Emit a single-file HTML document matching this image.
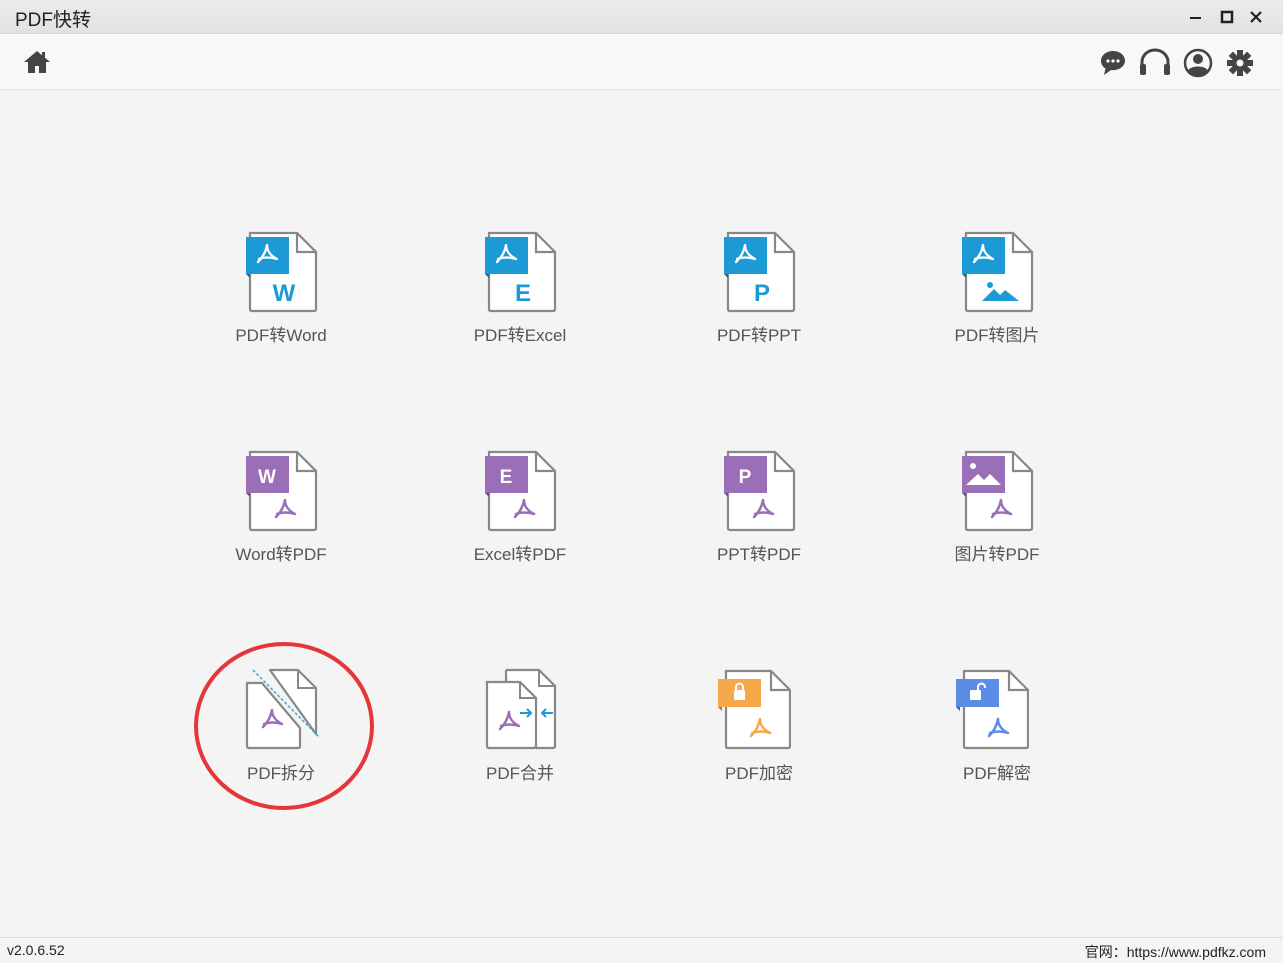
<!DOCTYPE html>
<html><head><meta charset="utf-8"><style>
*{margin:0;padding:0;box-sizing:border-box}
body{width:1283px;height:963px;overflow:hidden;background:#f4f4f4;font-family:"Liberation Sans","Noto Sans CJK SC",sans-serif;position:relative}
.title{position:absolute;left:0;top:0;width:1283px;height:34px;background:linear-gradient(#ececec,#e2e2e2);border-bottom:1px solid #d8d8d8}
.title span{position:absolute;left:15px;top:5px;font-size:19px;color:#222}
.tb{position:absolute;left:0;top:34px;width:1283px;height:56px;background:#f8f8f8;border-bottom:1px solid #e4e4e4}
.lab{position:absolute;width:200px;text-align:center;font-size:17px;color:#555}
svg.ic{position:absolute;width:74px;height:84px}
.foot{position:absolute;left:0;top:937px;width:1283px;height:26px;border-top:1px solid #ddd;background:#f4f4f4;font-size:14px;color:#222}
</style></head><body>
<div class="title"><span>PDF快转</span>
<svg style="position:absolute;left:1185px;top:8px" width="90" height="18"><line x1="5" y1="10" x2="16" y2="10" stroke="#222" stroke-width="2"/><rect x="37" y="4" width="10" height="10" fill="none" stroke="#222" stroke-width="2.5"/><path d="M66 4L76 14M76 4L66 14" stroke="#222" stroke-width="2.2"/></svg>
</div>
<div class="tb">
<svg style="position:absolute;left:23px;top:15px" width="28" height="26" viewBox="0 0 28 26"><path d="M14 2L1 13h4v11h7v-7h4v7h7V13h4z" fill="#444"/><rect x="19" y="3" width="3" height="6" fill="#444"/></svg>
<svg style="position:absolute;left:1099px;top:14px" width="160" height="30" viewBox="0 0 160 30">
<path d="M14 3C7 3 2 7.5 2 13c0 3.5 2 6 4.5 7.5L5 27l7-5c.7.1 1.3.1 2 .1 7 0 12-4.5 12-9.5S21 3 14 3z" fill="#444"/>
<circle cx="9" cy="13" r="1.6" fill="#fff"/><circle cx="14" cy="13" r="1.6" fill="#fff"/><circle cx="19" cy="13" r="1.6" fill="#fff"/>
<path d="M43 22v-8a13 12 0 0 1 26 0v8" fill="none" stroke="#444" stroke-width="3"/><rect x="41" y="16" width="6" height="11" rx="2" fill="#444"/><rect x="65" y="16" width="6" height="11" rx="2" fill="#444"/>
<circle cx="99" cy="15" r="13" fill="none" stroke="#444" stroke-width="2.5"/><circle cx="99" cy="11" r="5" fill="#444"/><path d="M89 23c2-6 18-6 20 0a13 13 0 0 1-20 0z" fill="#444"/>
<g transform="translate(141,15)" fill="#444"><circle r="8"/><rect x="-3" y="-13" width="6" height="6"/><rect x="-3" y="-13" width="6" height="6" transform="rotate(45)"/><rect x="-3" y="-13" width="6" height="6" transform="rotate(90)"/><rect x="-3" y="-13" width="6" height="6" transform="rotate(135)"/><rect x="-3" y="-13" width="6" height="6" transform="rotate(180)"/><rect x="-3" y="-13" width="6" height="6" transform="rotate(225)"/><rect x="-3" y="-13" width="6" height="6" transform="rotate(270)"/><rect x="-3" y="-13" width="6" height="6" transform="rotate(315)"/><circle r="3.5" fill="#f8f8f8"/></g>
</svg>
</div>

<!-- row1 -->
<svg class="ic" style="left:245px;top:230px" viewBox="0 0 74 84"><path d="M5 3H52L71 22V79Q71 81 69 81H7Q5 81 5 79Z" fill="#fff" stroke="#888" stroke-width="2.2"/><path d="M52 3V22H71" fill="none" stroke="#888" stroke-width="2.2"/><rect x="1" y="7" width="43" height="37" fill="#1b9ad6"/><path d="M1 44h4v4z" fill="#0e6a99"/><path d="M22 15c-1 6-4 12-9 17M22 15c0 6 4 11 10 14M14 29c5-2 12-2 18 0" fill="none" stroke="#fff" stroke-width="2.3" stroke-linecap="round"/><text x="39" y="71" font-size="24" font-weight="bold" fill="#1b9ad6" text-anchor="middle" font-family="Liberation Sans">W</text></svg>
<svg class="ic" style="left:484px;top:230px" viewBox="0 0 74 84"><path d="M5 3H52L71 22V79Q71 81 69 81H7Q5 81 5 79Z" fill="#fff" stroke="#888" stroke-width="2.2"/><path d="M52 3V22H71" fill="none" stroke="#888" stroke-width="2.2"/><rect x="1" y="7" width="43" height="37" fill="#1b9ad6"/><path d="M1 44h4v4z" fill="#0e6a99"/><path d="M22 15c-1 6-4 12-9 17M22 15c0 6 4 11 10 14M14 29c5-2 12-2 18 0" fill="none" stroke="#fff" stroke-width="2.3" stroke-linecap="round"/><text x="39" y="71" font-size="24" font-weight="bold" fill="#1b9ad6" text-anchor="middle" font-family="Liberation Sans">E</text></svg>
<svg class="ic" style="left:723px;top:230px" viewBox="0 0 74 84"><path d="M5 3H52L71 22V79Q71 81 69 81H7Q5 81 5 79Z" fill="#fff" stroke="#888" stroke-width="2.2"/><path d="M52 3V22H71" fill="none" stroke="#888" stroke-width="2.2"/><rect x="1" y="7" width="43" height="37" fill="#1b9ad6"/><path d="M1 44h4v4z" fill="#0e6a99"/><path d="M22 15c-1 6-4 12-9 17M22 15c0 6 4 11 10 14M14 29c5-2 12-2 18 0" fill="none" stroke="#fff" stroke-width="2.3" stroke-linecap="round"/><text x="39" y="71" font-size="24" font-weight="bold" fill="#1b9ad6" text-anchor="middle" font-family="Liberation Sans">P</text></svg>
<svg class="ic" style="left:961px;top:230px" viewBox="0 0 74 84"><path d="M5 3H52L71 22V79Q71 81 69 81H7Q5 81 5 79Z" fill="#fff" stroke="#888" stroke-width="2.2"/><path d="M52 3V22H71" fill="none" stroke="#888" stroke-width="2.2"/><rect x="1" y="7" width="43" height="37" fill="#1b9ad6"/><path d="M1 44h4v4z" fill="#0e6a99"/><path d="M22 15c-1 6-4 12-9 17M22 15c0 6 4 11 10 14M14 29c5-2 12-2 18 0" fill="none" stroke="#fff" stroke-width="2.3" stroke-linecap="round"/><circle cx="29" cy="55" r="3" fill="#1b9ad6"/><path d="M21 71l12-12 6 6 5-5 14 11z" fill="#1b9ad6"/></svg>
<div class="lab" style="left:181px;top:321px">PDF转Word</div>
<div class="lab" style="left:420px;top:321px">PDF转Excel</div>
<div class="lab" style="left:659px;top:321px">PDF转PPT</div>
<div class="lab" style="left:897px;top:321px">PDF转图片</div>

<!-- row2 -->
<svg class="ic" style="left:245px;top:449px" viewBox="0 0 74 84"><path d="M5 3H52L71 22V79Q71 81 69 81H7Q5 81 5 79Z" fill="#fff" stroke="#888" stroke-width="2.2"/><path d="M52 3V22H71" fill="none" stroke="#888" stroke-width="2.2"/><rect x="1" y="7" width="43" height="37" fill="#9b6fb8"/><path d="M1 44h4v4z" fill="#6b4a82"/><text x="22" y="34" font-size="19" font-weight="bold" fill="#fff" text-anchor="middle" font-family="Liberation Sans">W</text><path d="M40 51c-1 6-4 12-9 17M40 51c0 6 4 11 10 14M32 65c5-2 12-2 18 0" fill="none" stroke="#9b6fb8" stroke-width="2.5" stroke-linecap="round"/></svg>
<svg class="ic" style="left:484px;top:449px" viewBox="0 0 74 84"><path d="M5 3H52L71 22V79Q71 81 69 81H7Q5 81 5 79Z" fill="#fff" stroke="#888" stroke-width="2.2"/><path d="M52 3V22H71" fill="none" stroke="#888" stroke-width="2.2"/><rect x="1" y="7" width="43" height="37" fill="#9b6fb8"/><path d="M1 44h4v4z" fill="#6b4a82"/><text x="22" y="34" font-size="19" font-weight="bold" fill="#fff" text-anchor="middle" font-family="Liberation Sans">E</text><path d="M40 51c-1 6-4 12-9 17M40 51c0 6 4 11 10 14M32 65c5-2 12-2 18 0" fill="none" stroke="#9b6fb8" stroke-width="2.5" stroke-linecap="round"/></svg>
<svg class="ic" style="left:723px;top:449px" viewBox="0 0 74 84"><path d="M5 3H52L71 22V79Q71 81 69 81H7Q5 81 5 79Z" fill="#fff" stroke="#888" stroke-width="2.2"/><path d="M52 3V22H71" fill="none" stroke="#888" stroke-width="2.2"/><rect x="1" y="7" width="43" height="37" fill="#9b6fb8"/><path d="M1 44h4v4z" fill="#6b4a82"/><text x="22" y="34" font-size="19" font-weight="bold" fill="#fff" text-anchor="middle" font-family="Liberation Sans">P</text><path d="M40 51c-1 6-4 12-9 17M40 51c0 6 4 11 10 14M32 65c5-2 12-2 18 0" fill="none" stroke="#9b6fb8" stroke-width="2.5" stroke-linecap="round"/></svg>
<svg class="ic" style="left:961px;top:449px" viewBox="0 0 74 84"><path d="M5 3H52L71 22V79Q71 81 69 81H7Q5 81 5 79Z" fill="#fff" stroke="#888" stroke-width="2.2"/><path d="M52 3V22H71" fill="none" stroke="#888" stroke-width="2.2"/><rect x="1" y="7" width="43" height="37" fill="#9b6fb8"/><path d="M1 44h4v4z" fill="#6b4a82"/><circle cx="12" cy="17" r="3" fill="#fff"/><path d="M5 36l12-11 6 6 6-6 11 11z" fill="#fff"/><path d="M40 51c-1 6-4 12-9 17M40 51c0 6 4 11 10 14M32 65c5-2 12-2 18 0" fill="none" stroke="#9b6fb8" stroke-width="2.5" stroke-linecap="round"/></svg>
<div class="lab" style="left:181px;top:540px">Word转PDF</div>
<div class="lab" style="left:420px;top:540px">Excel转PDF</div>
<div class="lab" style="left:659px;top:540px">PPT转PDF</div>
<div class="lab" style="left:897px;top:540px">图片转PDF</div>

<!-- row3 -->
<svg class="ic" style="left:245px;top:668px" viewBox="0 0 74 84"><path d="M25 2H53L71 20V66Z" fill="#fff" stroke="#888" stroke-width="2.2" stroke-linejoin="round"/><path d="M53 2V20H71" fill="none" stroke="#888" stroke-width="2"/><path d="M2 15H17L55 60V78Q55 80 53 80H4Q2 80 2 78Z" fill="#fff" stroke="#888" stroke-width="2.2" stroke-linejoin="round"/><line x1="8" y1="2" x2="75" y2="70" stroke="#3aa8d8" stroke-width="1.5" stroke-dasharray="3 2"/><path d="M27 42c-1 6-4 12-9 17M27 42c0 6 4 11 10 14M19 56c5-2 12-2 18 0" fill="none" stroke="#9b6fb8" stroke-width="2.5" stroke-linecap="round"/></svg>
<svg class="ic" style="left:484px;top:668px" viewBox="0 0 74 84"><path d="M22 2H55L71 18V78Q71 80 69 80H52" fill="#fff" stroke="#888" stroke-width="2.2"/><path d="M22 2V14" stroke="#888" stroke-width="2.2"/><path d="M55 2V18H71" fill="none" stroke="#888" stroke-width="2"/><path d="M3 14H36L52 30V78Q52 80 50 80H5Q3 80 3 78Z" fill="#fff" stroke="#888" stroke-width="2.2"/><path d="M36 14V30H52" fill="none" stroke="#888" stroke-width="2"/><path d="M36 45h10M43 41l4 4-4 4M69 45H58M62 41l-4 4 4 4" fill="none" stroke="#1b9ad6" stroke-width="2"/><path d="M25 44c-1 6-4 12-9 17M25 44c0 6 4 11 10 14M17 58c5-2 12-2 18 0" fill="none" stroke="#9b6fb8" stroke-width="2.5" stroke-linecap="round"/></svg>
<svg class="ic" style="left:717px;top:668px" viewBox="0 0 74 84"><path d="M9 3H54L73 22V78Q73 80 71 80H11Q9 80 9 78Z" fill="#fff" stroke="#888" stroke-width="2.2"/><path d="M54 3V22H73" fill="none" stroke="#888" stroke-width="2.2"/><rect x="1" y="11" width="43" height="28" fill="#f6a94a"/><path d="M1 39h4v4z" fill="#b87520"/><rect x="17" y="22" width="11" height="10" rx="1" fill="#fff"/><path d="M19 22v-3a3.5 3.5 0 0 1 7 0v3" fill="none" stroke="#fff" stroke-width="2"/><path d="M43 51c-1 6-4 12-9 17M43 51c0 6 4 11 10 14M35 65c5-2 12-2 18 0" fill="none" stroke="#f6a94a" stroke-width="2.5" stroke-linecap="round"/></svg>
<svg class="ic" style="left:955px;top:668px" viewBox="0 0 74 84"><path d="M9 3H54L73 22V78Q73 80 71 80H11Q9 80 9 78Z" fill="#fff" stroke="#888" stroke-width="2.2"/><path d="M54 3V22H73" fill="none" stroke="#888" stroke-width="2.2"/><rect x="1" y="11" width="43" height="28" fill="#5b8de6"/><path d="M1 39h4v4z" fill="#3560b0"/><rect x="15" y="22" width="11" height="10" rx="1" fill="#fff"/><path d="M23 22v-3a3.5 3.5 0 0 1 7 0v1" fill="none" stroke="#fff" stroke-width="2"/><path d="M43 51c-1 6-4 12-9 17M43 51c0 6 4 11 10 14M35 65c5-2 12-2 18 0" fill="none" stroke="#5b8de6" stroke-width="2.5" stroke-linecap="round"/></svg>
<div class="lab" style="left:181px;top:759px">PDF拆分</div>
<div class="lab" style="left:420px;top:759px">PDF合并</div>
<div class="lab" style="left:659px;top:759px">PDF加密</div>
<div class="lab" style="left:897px;top:759px">PDF解密</div>

<svg style="position:absolute;left:190px;top:640px" width="190" height="175"><ellipse cx="94" cy="86" rx="88" ry="82" fill="none" stroke="#e5373a" stroke-width="4"/></svg>

<div class="foot"><span style="position:absolute;left:7px;top:4px">v2.0.6.52</span><span style="position:absolute;right:17px;top:4px">官网：https://www.pdfkz.com</span></div>
</body></html>
